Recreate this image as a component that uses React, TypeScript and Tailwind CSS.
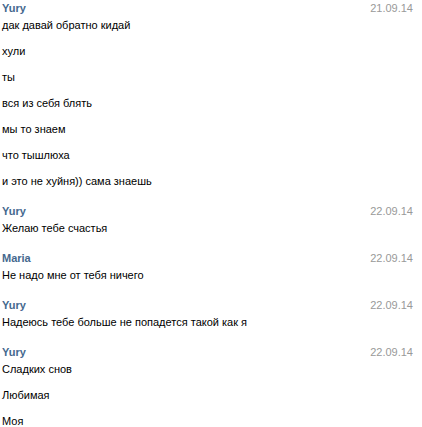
const groups = [
  {
    name: "Yury",
    date: "21.09.14",
    lines: [
      "дак давай обратно кидай",
      "хули",
      "ты",
      "вся из себя блять",
      "мы то знаем",
      "что тышлюха",
      "и это не хуйня)) сама знаешь",
    ],
  },
  { name: "Yury", date: "22.09.14", lines: ["Желаю тебе счастья"] },
  { name: "Maria", date: "22.09.14", lines: ["Не надо мне от тебя ничего"] },
  { name: "Yury", date: "22.09.14", lines: ["Надеюсь тебе больше не попадется такой как я"] },
  { name: "Yury", date: "22.09.14", lines: ["Сладких снов", "Любимая", "Моя"] },
];

export default function App() {
  return (
    <div className="min-h-screen bg-white pt-[1px] pl-[2px] pr-[9px] text-[11px] leading-[14px] text-black [font-family:'Liberation_Sans',Tahoma,sans-serif]">
      <div className="flex flex-col gap-4">
        {groups.map((g, i) => (
          <div key={i} className="flex flex-col">
            <div className="flex items-center justify-between">
              <span className="font-bold text-[#45688e]">{g.name}</span>
              <span className="text-[#999999]">{g.date}</span>
            </div>
            <div className="mt-[3px] flex flex-col gap-3">
              {g.lines.map((line, j) => (
                <div key={j}>{line}</div>
              ))}
            </div>
          </div>
        ))}
      </div>
    </div>
  );
}
